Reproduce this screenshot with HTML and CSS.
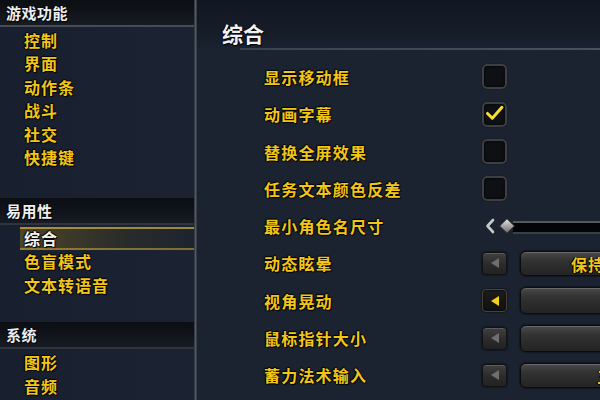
FILE: index.html
```html
<!DOCTYPE html>
<html lang="zh-CN">
<head>
<meta charset="utf-8">
<title>综合</title>
<link rel="stylesheet" href="styles.css">
</head>
<body>
<div class="ui">
  <aside class="side">
    <section class="cat">
      <h2 class="cat-head">游戏功能</h2>
      <ul class="cat-list">
        <li>控制</li>
        <li>界面</li>
        <li>动作条</li>
        <li>战斗</li>
        <li>社交</li>
        <li>快捷键</li>
      </ul>
    </section>
    <section class="cat cat-2">
      <h2 class="cat-head">易用性</h2>
      <ul class="cat-list">
        <li class="sel">综合</li>
        <li>色盲模式</li>
        <li>文本转语音</li>
      </ul>
    </section>
    <section class="cat cat-3">
      <h2 class="cat-head">系统</h2>
      <ul class="cat-list">
        <li>图形</li>
        <li>音频</li>
      </ul>
    </section>
  </aside>
  <div class="divider"></div>
  <main class="panel">
    <header class="panel-head"><h1>综合</h1></header>
    <div class="rule"></div>
    <div class="rows">
      <div class="row"><span class="label">显示移动框</span><span class="check"></span></div>
      <div class="row"><span class="label">动画字幕</span><span class="check"><svg viewBox="0 0 24 24" width="24" height="24"><path d="M4 12.5 L9.5 18 L20.5 5.5" fill="none" stroke="#f6e12a" stroke-width="3.4" stroke-linecap="round" stroke-linejoin="round"/></svg></span></div>
      <div class="row"><span class="label">替换全屏效果</span><span class="check"></span></div>
      <div class="row"><span class="label">任务文本颜色反差</span><span class="check"></span></div>
      <div class="row"><span class="label">最小角色名尺寸</span>
        <span class="slider">
          <svg class="chev" viewBox="0 0 10 16" width="10" height="16"><path d="M8 2 L2.5 8 L8 14" fill="none" stroke="#c9c9c9" stroke-width="2.6" stroke-linecap="round" stroke-linejoin="round"/></svg>
          <span class="track"><span class="thumb"></span></span>
        </span>
      </div>
      <div class="row"><span class="label">动态眩晕</span><span class="btn"><svg viewBox="0 0 10 12" width="10" height="12"><polygon points="9,1 1,6 9,11" fill="#6f6f6f"/></svg></span><span class="drop drop-a">保持不变</span></div>
      <div class="row"><span class="label">视角晃动</span><span class="btn btn-on"><svg viewBox="0 0 10 12" width="10" height="12"><polygon points="9,1 1,6 9,11" fill="#f2d01c"/></svg></span><span class="drop"></span></div>
      <div class="row"><span class="label">鼠标指针大小</span><span class="btn"><svg viewBox="0 0 10 12" width="10" height="12"><polygon points="9,1 1,6 9,11" fill="#6f6f6f"/></svg></span><span class="drop"></span></div>
      <div class="row"><span class="label">蓄力法术输入</span><span class="btn"><svg viewBox="0 0 10 12" width="10" height="12"><polygon points="9,1 1,6 9,11" fill="#6f6f6f"/></svg></span><span class="drop drop-b">三</span></div>
    </div>
  </main>
</div>
</body>
</html>
```

FILE: styles.css
```css
html, body {
  margin: 0;
  padding: 0;
  background: #1a2230;
}

.ui {
  display: flex;
  width: 600px;
  height: 400px;
  overflow: hidden;
  font-family: "Noto Sans CJK SC", "Noto Sans", sans-serif;
  background: #1a2230;
}

/* ---------- sidebar ---------- */
.side {
  width: 194px;
  flex: none;
  background: linear-gradient(to right, #182030, #1b2332);
}

.cat-head {
  margin: 0;
  height: 25px;
  line-height: 25px;
  padding-left: 6px;
  font-size: 15px;
  font-weight: 700;
  color: #eeeeee;
  letter-spacing: 0.5px;
  background: linear-gradient(#0b0e13, #11151c 60%, #171c24);
  border-bottom: 2px solid #474c54;
  text-shadow: 1px 1px 1px #000, -1px 0 1px #000;
}

.cat-2 { margin-top: 28.6px; }
.cat-2 .cat-head { border-bottom-color: #30353d; }
.cat-3 { margin-top: 25px; }
.cat-3 .cat-head { border-bottom-color: #30353d; }

.cat-list {
  list-style: none;
  margin: 0;
  padding: 2px 0 0 0;
}

.cat-list li {
  height: 23.4px;
  line-height: 23.4px;
  padding-left: 24px;
  font-size: 16px;
  font-weight: 700;
  letter-spacing: 1px;
  color: #f2c619;
  text-shadow: 1px 1px 1px #000, -1px 0 1px #000, 0 -1px 1px #000;
}

.cat-list li.sel {
  margin-left: 20px;
  padding-left: 4px;
  color: #f4f4f4;
  background: linear-gradient(to right, rgba(120, 100, 35, 0.55), rgba(70, 62, 30, 0.35) 60%, rgba(40, 40, 35, 0.2));
  box-shadow: inset 0 2px 0 rgba(205, 170, 60, 0.75), inset 0 -2px 0 rgba(205, 170, 60, 0.55);
}

.divider {
  width: 3px;
  flex: none;
  background: linear-gradient(to right, #262c35, #545a62 50%, #2a3038);
}

/* ---------- main panel ---------- */
.panel {
  flex: 1;
  min-width: 0;
  background: #1b2331;
}

.panel-head {
  height: 48px;
  background: linear-gradient(#111722, #161d29 70%, #1a2130);
}

.panel-head h1 {
  margin: 0;
  padding: 20px 0 0 25px;
  font-size: 21px;
  line-height: 26px;
  font-weight: 700;
  color: #f2f2f2;
  text-shadow: 1px 1px 1px #000, -1px 0 1px #000;
}

.rule {
  height: 2px;
  margin-left: 43px;
  background: linear-gradient(to right, #3a414c, #4a515c);
}

.rows {
  padding-top: 8.3px;
}

.row {
  display: flex;
  align-items: center;
  height: 37.3px;
  padding-left: 67px;
}

.label {
  width: 218px;
  flex: none;
  font-size: 16px;
  font-weight: 700;
  letter-spacing: 1.2px;
  color: #f2c619;
  text-shadow: 1px 1px 1px #000, -1px 0 1px #000, 0 -1px 1px #000;
}

.check {
  width: 21px;
  height: 21px;
  flex: none;
  display: flex;
  align-items: center;
  justify-content: center;
  border: 2px solid #3e3f42;
  border-radius: 5px;
  background: #0e1014;
  box-shadow: inset 0 0 3px #000, 0 0 1px #000;
}

.check svg { margin-top: -2px; }

/* slider */
.slider {
  flex: 1;
  display: flex;
  align-items: center;
  margin-left: 3px;
}

.chev { flex: none; }

.track {
  position: relative;
  flex: 1;
  height: 9px;
  margin-left: 18px;
  margin-top: 2px;
  background: #040506;
  border-top: 2px solid #55585c;
  border-bottom: 2px solid #3c3f44;
}

.thumb {
  position: absolute;
  left: -12px;
  top: -3px;
  width: 10px;
  height: 10px;
  transform: rotate(45deg);
  background: linear-gradient(135deg, #e6e6e6, #9a9a9a 60%, #6a6a6a);
  border: 1px solid #2a2a2a;
}

/* dropdown rows */
.btn {
  width: 23px;
  height: 21px;
  flex: none;
  display: flex;
  align-items: center;
  justify-content: center;
  border: 1px solid #121212;
  border-radius: 4px;
  background: linear-gradient(#404040, #2b2b2b 55%, #222);
  box-shadow: inset 0 1px 0 #5c5c5c, 0 0 2px #000;
}

.btn-on {
  background: linear-gradient(#1c1c1c, #101010);
  border-color: #4a4436;
  box-shadow: inset 0 0 2px #000, 0 0 2px #000;
}

.drop {
  flex: none;
  width: 170px;
  height: 25px;
  margin-left: 13px;
  border: 1px solid #0c0c0c;
  border-radius: 6px;
  background: linear-gradient(#4a4a4a, #333333 35%, #2a2a2a 70%, #242424);
  box-shadow: inset 0 1px 0 #6a6a6a, 0 0 2px #000;
  font-size: 16px;
  font-weight: 700;
  line-height: 25px;
  letter-spacing: 1px;
  color: #f2c619;
  text-shadow: 1px 1px 1px #000, -1px 0 1px #000;
  white-space: nowrap;
}

.drop-a { padding-left: 50px; box-sizing: border-box; }
.drop-b { padding-left: 76px; box-sizing: border-box; }
```
